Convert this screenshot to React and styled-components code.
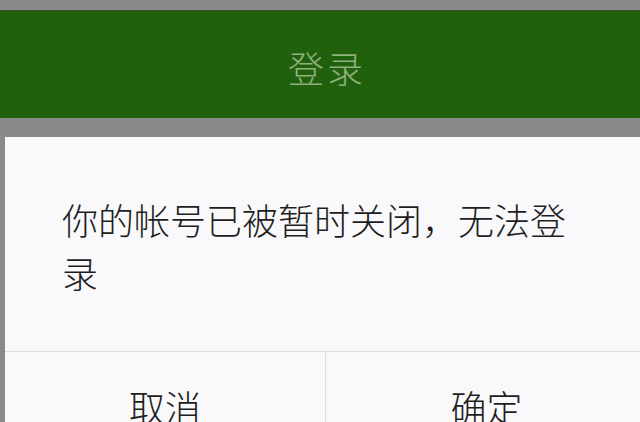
import React from 'react';
import styled, { createGlobalStyle } from 'styled-components';

const GlobalStyle = createGlobalStyle`
  html, body {
    margin: 0;
    padding: 0;
    background: #8a898b;
    overflow: hidden;
  }
  body {
    font-family: 'Noto Sans CJK SC', 'Noto Sans', sans-serif;
  }
`;

const Screen = styled.div`
  width: 640px;
  height: 422px;
  overflow: hidden;
  background: #8a898b;
  padding-top: 10px;
  box-sizing: border-box;
`;

const TitleBar = styled.div`
  height: 108px;
  background: #21610e;
  border-top: 2px solid #2a5518;
  box-sizing: border-box;
  display: flex;
  align-items: center;
  justify-content: center;
`;

const Title = styled.span`
  color: #8fb07f;
  font-size: 36px;
  font-weight: 300;
  letter-spacing: 3px;
  padding-left: 14px;
  padding-top: 4px;
`;

const Dialog = styled.div`
  margin-top: 19px;
  margin-left: 5px;
  width: 642px;
  background: #f9f9fb;
`;

const Message = styled.p`
  margin: 0;
  padding: 56px 56px 52px 57px;
  font-size: 36px;
  font-weight: 300;
  line-height: 53px;
  color: #1e1e1e;
  border-bottom: 1px solid #dcdcde;
`;

const Actions = styled.div`
  display: grid;
  grid-template-columns: 320px 1fr;
`;

const ActionButton = styled.div`
  display: block;
  height: 110px;
  padding-top: 36px;
  box-sizing: border-box;
  text-align: center;
  font-size: 36px;
  line-height: 36px;
  font-weight: 300;
  color: #1e1e1e;
  cursor: pointer;
  border-left: ${(p) => (p.$divided ? '1px solid #dcdcde' : 'none')};
`;

export default function App() {
  return (
    <Screen>
      <GlobalStyle />
      <TitleBar>
        <Title>登录</Title>
      </TitleBar>
      <Dialog>
        <Message>你的帐号已被暂时关闭，无法登录</Message>
        <Actions>
          <ActionButton>取消</ActionButton>
          <ActionButton $divided>确定</ActionButton>
        </Actions>
      </Dialog>
    </Screen>
  );
}
